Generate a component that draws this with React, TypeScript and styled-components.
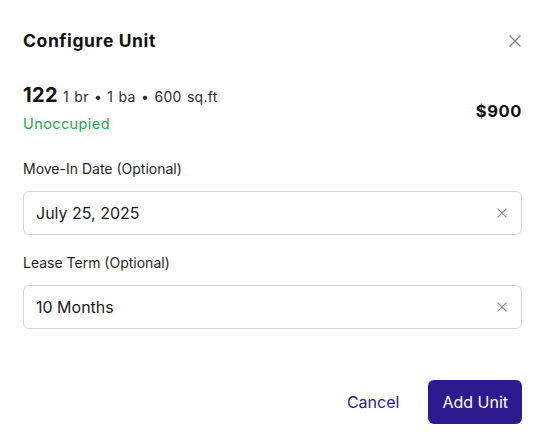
import React from "react";
import styled, { createGlobalStyle } from "styled-components";

const Global = createGlobalStyle`
  html, body { margin: 0; padding: 0; background: #ffffff; }
  body { font-family: Inter, "Noto Sans", sans-serif; color: #111111; }
  * { box-sizing: border-box; }
`;

const Dialog = styled.div`
  width: 546px;
  height: 447px;
  padding: 28px 24px 23px 23px;
  display: flex;
  flex-direction: column;
  background: #fff;
`;

const Header = styled.div`
  display: flex;
  align-items: center;
  justify-content: space-between;
  height: 26px;
`;

const Title = styled.h2`
  margin: 0;
  font-family: Inter, sans-serif;
  font-size: 17.5px;
  line-height: 26px;
  font-weight: 700;
  letter-spacing: 0.6px;
  color: #111;
`;

const IconButton = styled.button`
  border: 0;
  background: transparent;
  padding: 0;
  width: 14px;
  height: 14px;
  display: flex;
  align-items: center;
  justify-content: center;
  color: #7a808a;
  cursor: pointer;
`;

const UnitRow = styled.div`
  margin-top: 29px;
  display: flex;
  align-items: center;
  justify-content: space-between;
`;

const UnitInfo = styled.div`
  display: flex;
  flex-direction: column;
`;

const UnitLine = styled.div`
  display: flex;
  align-items: baseline;
  gap: 5px;
  height: 24px;
`;

const UnitNumber = styled.span`
  font-size: 20px;
  font-weight: 700;
  letter-spacing: 0.4px;
  color: #111;
`;

const UnitMeta = styled.span`
  font-size: 14px;
  letter-spacing: 0.3px;
  word-spacing: 1px;
  color: #2a2a2a;
`;

const Status = styled.span`
  margin-top: 7px;
  font-size: 14.5px;
  letter-spacing: 0.4px;
  line-height: 20px;
  color: #1fa64a;
`;

const Price = styled.span`
  font-size: 16.5px;
  font-weight: 700;
  letter-spacing: 0.6px;
  color: #111;
  margin-top: 4px;
`;

const Field = styled.div<{ $top: number }>`
  margin-top: ${(p) => p.$top}px;
  display: flex;
  flex-direction: column;
  gap: 12px;
`;

const Label = styled.label`
  font-size: 14px;
  line-height: 20px;
  color: #1f1f1f;
`;

const InputBox = styled.div`
  height: 44px;
  border: 1px solid #d6d6d6;
  border-radius: 6px;
  display: flex;
  align-items: center;
  justify-content: space-between;
  padding: 0 12px 0 12px;
`;

const Value = styled.span`
  font-size: 16px;
  color: #1a1a1a;
`;

const Footer = styled.div`
  margin-top: auto;
  display: flex;
  justify-content: flex-end;
  align-items: center;
  gap: 29px;
`;

const TextButton = styled.button`
  border: 0;
  background: transparent;
  font-family: Inter, sans-serif;
  font-size: 16px;
  color: #2d1a8c;
  padding: 0;
  cursor: pointer;
`;

const PrimaryButton = styled.button`
  height: 44px;
  padding: 0 14px;
  border: 0;
  border-radius: 6px;
  background: #2d1a8e;
  color: #fff;
  font-family: Inter, sans-serif;
  font-size: 16px;
  cursor: pointer;
`;

const XIcon = ({ size = 12 }: { size?: number }) => (
  <svg width={size} height={size} viewBox="0 0 12 12" fill="none">
    <path d="M1 1 L11 11 M11 1 L1 11" stroke="currentColor" strokeWidth="1.3" strokeLinecap="round" />
  </svg>
);

export default function App() {
  return (
    <>
      <Global />
      <Dialog>
        <Header>
          <Title>Configure Unit</Title>
          <IconButton aria-label="Close">
            <XIcon size={12} />
          </IconButton>
        </Header>
        <UnitRow>
          <UnitInfo>
            <UnitLine>
              <UnitNumber>122</UnitNumber>
              <UnitMeta>1 br • 1 ba • 600 sq.ft</UnitMeta>
            </UnitLine>
            <Status>Unoccupied</Status>
          </UnitInfo>
          <Price>$900</Price>
        </UnitRow>
        <Field $top={25}>
          <Label>Move-In Date (Optional)</Label>
          <InputBox>
            <Value>July 25, 2025</Value>
            <IconButton aria-label="Clear">
              <XIcon size={10} />
            </IconButton>
          </InputBox>
        </Field>
        <Field $top={18}>
          <Label>Lease Term (Optional)</Label>
          <InputBox>
            <Value>10 Months</Value>
            <IconButton aria-label="Clear">
              <XIcon size={10} />
            </IconButton>
          </InputBox>
        </Field>
        <Footer>
          <TextButton>Cancel</TextButton>
          <PrimaryButton>Add Unit</PrimaryButton>
        </Footer>
      </Dialog>
    </>
  );
}
